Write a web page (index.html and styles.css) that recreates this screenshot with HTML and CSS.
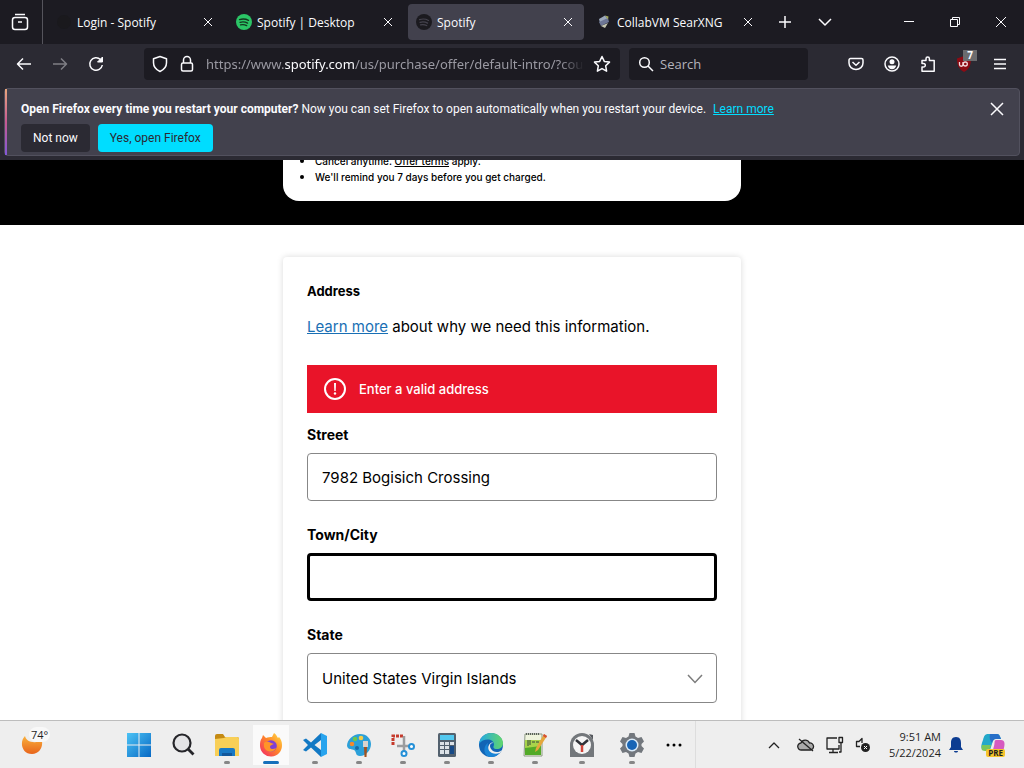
FILE: index.html
```html
<!DOCTYPE html>
<html lang="en">
<head>
    <meta charset="UTF-8">
    <meta name="viewport" content="width=device-width, initial-scale=1.0">
    <title>Spotify</title>
    <link rel="stylesheet" href="styles.css">
</head>
<body>
    <header class="browser">
        <div class="tab-bar">
            <button class="view-button" aria-label="Firefox View">
                <svg class="icon" width="18" height="18" viewBox="0 0 18 18"><path d="M4 1.500h10"/><rect x="1.500" y="4.500" width="15" height="12" rx="2.500"/><path d="M7 9h4"/></svg>
            </button>
            <div class="tabs">
                <div class="tab">
                    <svg width="16" height="16" viewBox="0 0 16 16"><circle cx="8" cy="8" r="7" fill="#1a191d"/></svg>
                    <span class="tab-title">Login - Spotify</span>
                    <button class="tab-close" aria-label="Close tab"><svg class="icon thin" width="16" height="16" viewBox="0 0 16 16"><path d="M4 4l8 8M12 4l-8 8"/></svg></button>
                </div>
                <div class="tab">
                    <svg width="16" height="16" viewBox="0 0 16 16"><circle cx="8" cy="8" r="8" fill="#2bc566"/><path d="M3.5 5.6c3-.9 6.500-.6 9 .8M4 8.300c2.600-.7 5.400-.4 7.600.8M4.500 10.800c2.200-.5 4.300-.3 6.200.8" fill="none" stroke="#14361f" stroke-width="1.300" stroke-linecap="round"/></svg>
                    <span class="tab-title">Spotify | Desktop</span>
                    <button class="tab-close" aria-label="Close tab"><svg class="icon thin" width="16" height="16" viewBox="0 0 16 16"><path d="M4 4l8 8M12 4l-8 8"/></svg></button>
                </div>
                <div class="tab active">
                    <svg width="16" height="16" viewBox="0 0 16 16"><circle cx="8" cy="8" r="8" fill="#1b1a1f"/><path d="M3.500 5.600c3-.9 6.500-.6 9 .8M4 8.300c2.600-.7 5.400-.4 7.600.8M4.500 10.800c2.200-.5 4.300-.3 6.200.8" fill="none" stroke="#45434e" stroke-width="1.200" stroke-linecap="round"/></svg>
                    <span class="tab-title">Spotify</span>
                    <button class="tab-close" aria-label="Close tab"><svg class="icon thin" width="16" height="16" viewBox="0 0 16 16"><path d="M4 4l8 8M12 4l-8 8"/></svg></button>
                </div>
                <div class="tab">
                    <svg width="16" height="16" viewBox="0 0 16 16"><path d="M3 5l6-3.500 3 3.500-8 4z" fill="#9aa7bb"/><path d="M3 8l9-4 1 4-8 4z" fill="#6c7595"/><path d="M9 1.500l3.500 1-.5 3z" fill="#a3aa5b"/><path d="M5 12l7-3-3 5z" fill="#c4c6b2"/></svg>
                    <span class="tab-title">CollabVM SearXNG</span>
                    <button class="tab-close" aria-label="Close tab"><svg class="icon thin" width="16" height="16" viewBox="0 0 16 16"><path d="M4 4l8 8M12 4l-8 8"/></svg></button>
                </div>
            </div>
            <button class="bar-button" aria-label="New tab"><svg class="icon" width="16" height="16" viewBox="0 0 16 16"><path d="M8 2v12M2 8h12"/></svg></button>
            <button class="bar-button" aria-label="List all tabs"><svg class="icon" width="16" height="16" viewBox="0 0 16 16"><path d="M2 5l6 6 6-6"/></svg></button>
            <div class="window-controls">
                <button aria-label="Minimize"><svg class="icon thin" width="12" height="12" viewBox="0 0 12 12"><path d="M1 5.500h10"/></svg></button>
                <button aria-label="Restore"><svg class="icon thin" width="12" height="12" viewBox="0 0 12 12"><path d="M1.500 3.500h7v7h-7zM3.500 3.500v-2h7v7h-2"/></svg></button>
                <button aria-label="Close"><svg class="icon thin" width="12" height="12" viewBox="0 0 12 12"><path d="M1 1l10 10M11 1L1 11"/></svg></button>
            </div>
        </div>

        <div class="nav-bar">
            <div class="nav-buttons">
                <button class="tool" aria-label="Back"><svg class="icon" width="16" height="16" viewBox="0 0 16 16"><path d="M7 2.500L1.500 8 7 13.500M1.500 8H15"/></svg></button>
                <button class="tool disabled" aria-label="Forward" disabled><svg class="icon" width="16" height="16" viewBox="0 0 16 16"><path d="M9 2.500L14.500 8 9 13.500M14.500 8H1"/></svg></button>
                <button class="tool" aria-label="Reload"><svg class="icon" width="16" height="16" viewBox="0 0 16 16"><path d="M12.500 3.500A6.300 6.300 0 1 0 14.300 9"/><path d="M14.500 1v5h-5z" fill="#fbfbfe" stroke-width="1"/></svg></button>
            </div>
            <div class="url-bar">
                <svg class="icon" width="16" height="18" viewBox="0 0 16 18"><path d="M8 1.500l6.500 2.300v4c0 4-2.700 7-6.500 8.700C4.200 14.800 1.500 11.800 1.500 7.800v-4z"/></svg>
                <svg class="icon" width="14" height="18" viewBox="0 0 14 18"><rect x="1.500" y="8" width="11" height="8" rx="1.500"/><path d="M3.500 8V5a3.500 3.500 0 0 1 7 0v3"/></svg>
                <span class="url">https://www.<b>spotify.com</b>/us/purchase/offer/default-intro/?cour</span>
                <button class="tool star" aria-label="Bookmark this page"><svg class="icon" width="18" height="18" viewBox="0 0 18 18"><path d="M9 1.500l2.300 4.900 5.200.7-3.800 3.700.9 5.400L9 13.600l-4.600 2.600.9-5.400-3.800-3.700 5.200-.7z"/></svg></button>
            </div>
            <label class="search-bar">
                <svg class="icon" width="16" height="16" viewBox="0 0 16 16"><circle cx="6.500" cy="6.500" r="4.800"/><path d="M10 10l5 5"/></svg>
                <input type="text" placeholder="Search" aria-label="Search">
            </label>
            <div class="nav-tools">
                <button class="tool" aria-label="Save to Pocket"><svg class="icon" width="16" height="16" viewBox="0 0 16 16"><path d="M2.500 2.500h11a1.500 1.500 0 0 1 1.500 1.500v3a7 6.500 0 0 1-14 0V4a1.500 1.500 0 0 1 1.500-1.500z"/><path d="M4.500 6L8 9.300 11.500 6"/></svg></button>
                <button class="tool" aria-label="Account"><svg class="icon" width="16" height="16" viewBox="0 0 16 16"><circle cx="8" cy="8" r="7"/><circle cx="8" cy="5.800" r="2.500" fill="#fbfbfe" stroke="none"/><path d="M3.800 9.500h8.400c-.4 2.400-2 3.700-4.200 3.700s-3.800-1.300-4.200-3.700z" fill="#fbfbfe" stroke="none"/></svg></button>
                <button class="tool" aria-label="Extensions"><svg class="icon" width="16" height="16" viewBox="0 0 16 16"><path d="M2 15.200V11h1.500a1.800 1.800 0 0 0 0-3.600H2V4.500h4V2.800a1.700 1.700 0 0 1 3.400 0v1.700h4.800v10.700z"/></svg></button>
                <button class="tool" aria-label="uBlock Origin">
                    <svg width="16" height="16" viewBox="0 0 16 16"><path d="M8 0l7 2.500C15 10 12.500 13.500 8 16 3.500 13.500 1 10 1 2.500z" fill="#8d0b14"/><path d="M3.500 6v2.500a1.500 1.500 0 0 0 3.500 0V6" fill="none" stroke="#f3d9dc" stroke-width="1.300"/><circle cx="9.300" cy="8" r="2" fill="none" stroke="#f3d9dc" stroke-width="1.300"/></svg>
                    <span class="count">7</span>
                </button>
                <button class="tool" aria-label="Open application menu"><svg class="icon" width="16" height="16" viewBox="0 0 16 16"><path d="M2 3.500h12M2 8h12M2 12.500h12"/></svg></button>
            </div>
        </div>

        <div class="notification">
            <div class="notification-body">
                <p><strong>Open Firefox every time you restart your computer?</strong> Now you can set Firefox to open automatically when you restart your device. <a href="#">Learn more</a></p>
                <div class="notification-actions">
                    <button>Not now</button>
                    <button class="primary">Yes, open Firefox</button>
                </div>
            </div>
            <button class="dismiss" aria-label="Dismiss"><svg class="icon" width="16" height="16" viewBox="0 0 16 16"><path d="M2 2l12 12M14 2L2 14"/></svg></button>
        </div>
    </header>

    <main class="page">
        <section class="hero">
            <div class="offer">
                <ul>
                    <li>Cancel anytime. <a href="#">Offer terms</a> apply.</li>
                    <li>We'll remind you 7 days before you get charged.</li>
                </ul>
            </div>
        </section>

        <form class="card">
            <h2>Address</h2>
            <p class="info"><a href="#">Learn more</a> about why we need this information.</p>
            <div class="alert" role="alert">
                <svg width="24" height="24" viewBox="0 0 24 24"><circle cx="12" cy="12" r="10" fill="none" stroke="#fff" stroke-width="2"/><path d="M11 6h2l-.3 8h-1.400z" fill="#fff"/><circle cx="12" cy="16.500" r="1.200" fill="#fff"/></svg>
                <span>Enter a valid address</span>
            </div>
            <div class="field">
                <label for="street">Street</label>
                <input type="text" id="street" value="7982 Bogisich Crossing">
            </div>
            <div class="field">
                <label for="city">Town/City</label>
                <input type="text" id="city" class="focused">
            </div>
            <div class="field">
                <label for="state">State</label>
                <div class="select-box">
                    <select id="state">
                        <option>United States Virgin Islands</option>
                    </select>
                    <svg width="16" height="16" viewBox="0 0 16 16"><path d="M1 4l7 7.500L15 4" fill="none" stroke="#7c7c7c" stroke-width="1.500"/></svg>
                </div>
            </div>
        </form>
    </main>

    <footer class="taskbar">
        <button class="weather" aria-label="Weather">
            <svg width="24" height="24" viewBox="0 0 24 24"><defs><linearGradient id="moon" x1="0" y1="0" x2="0" y2="1"><stop offset="0" stop-color="#f9b13c"/><stop offset="1" stop-color="#e8641b"/></linearGradient></defs><path d="M5 3c1 5 7 8 17 5 1 7-3 13-10 13C2 21-1 9 5 3z" fill="url(#moon)"/></svg>
            <span class="degrees">74°</span>
        </button>
        <nav class="apps">
            <button class="app" aria-label="Start"><svg width="24" height="24" viewBox="0 0 24 24"><defs><linearGradient id="win" x1="0" y1="0" x2="1" y2="1"><stop offset="0" stop-color="#4cc3f5"/><stop offset="1" stop-color="#0768c4"/></linearGradient></defs><path d="M0 0h11.500v11.500H0zM12.500 0H24v11.500H12.500zM0 12.500h11.500V24H0zM12.500 12.500H24V24H12.500z" fill="url(#win)"/></svg></button>
            <button class="app" aria-label="Search"><svg width="24" height="24" viewBox="0 0 24 24"><circle cx="11" cy="10" r="8.500" fill="#e4e4e6" stroke="#26262a" stroke-width="2.200"/><path d="M17 16l5.500 5.500" stroke="#26262a" stroke-width="2.800"/></svg></button>
            <button class="app running" aria-label="File Explorer"><svg width="26" height="24" viewBox="0 0 26 24"><path d="M1 3a2 2 0 0 1 2-2h6l2 3h12a2 2 0 0 1 2 2v4H1z" fill="#c48a14"/><path d="M1 6l9-1 2-1h11a2 2 0 0 1 2 2v17H1z" fill="#f8cf57"/><path d="M5 23v-6a2 2 0 0 1 2-2h12a2 2 0 0 1 2 2v6z" fill="#1879c5"/><path d="M8 20h10v3H8z" fill="#11579b"/></svg></button>
            <button class="app running current" aria-label="Firefox"><svg width="24" height="24" viewBox="0 0 24 24"><defs><linearGradient id="fox" x1="1" y1="0" x2="0" y2="1"><stop offset="0" stop-color="#ffe14a"/><stop offset=".45" stop-color="#ff8a27"/><stop offset="1" stop-color="#f2216b"/></linearGradient></defs><path d="M3 5l1-3 3 3c2-1 4-1 6-1l2-4c3 2 3 4 4 5l1-1c2 2 3 5 3 8a11 11 0 0 1-22 1c0-3 0-6 2-8z" fill="url(#fox)"/><circle cx="12" cy="13" r="5.800" fill="#7e3fd4"/><path d="M5 10c3-2 5-1 7 0l3 1c-2 1-4 1-4 3s3 3 6 1c-2 5-10 5-12-1z" fill="#ff9428"/></svg></button>
            <button class="app running" aria-label="Visual Studio Code"><svg width="24" height="24" viewBox="0 0 24 24"><path d="M18 0L8 9.500 3 5.500 0 7l5 5-5 5 3 1.500 5-4L18 24v-7l-6.500-5L18 7z" fill="#1279c4"/><path d="M18 0l6 3v18l-6 3z" fill="#28a4ee"/></svg></button>
            <button class="app running" aria-label="Paint"><svg width="24" height="24" viewBox="0 0 24 24"><path d="M13 1c7 0 11 5 11 10 0 6-5 12-11 12-5 0-3-4-6-6-2-1-6 0-7-4C0 7 6 1 13 1z" fill="#2ba0d9"/><circle cx="5" cy="11" r="2.300" fill="#f28a2c"/><circle cx="8" cy="6" r="2.300" fill="#6dc74d"/><circle cx="14" cy="5" r="2.300" fill="#f4cd47"/><circle cx="10" cy="15" r="2" fill="#176ba7"/><path d="M16 8h5v6h-5z" fill="#d7d3ce"/><path d="M17 14h3l-.5 10h-2z" fill="#a1521f"/></svg></button>
            <button class="app running" aria-label="Snipping Tool"><svg width="24" height="24" viewBox="0 0 24 24"><path d="M2 12V3h10" fill="none" stroke="#c53a2c" stroke-width="3" stroke-dasharray="3 1"/><path d="M13 3v15M6 13h12" stroke="#9b9c9e" stroke-width="2.500"/><circle cx="13" cy="20.500" r="2.500" fill="#fff" stroke="#2590d7" stroke-width="2"/><circle cx="20.500" cy="13.500" r="2.500" fill="#fff" stroke="#2590d7" stroke-width="2"/></svg></button>
            <button class="app running" aria-label="Calculator"><svg width="20" height="24" viewBox="0 0 20 24"><rect x="1" width="18" height="24" rx="1.500" fill="#53616e"/><path d="M3 2h14v5H3z" fill="#52c8ef"/><path d="M3 9h4v3H3zM8 9h4v3H8zM13 9h4v3h-4zM3 13h4v3H3zM8 13h4v3H8zM3 17h4v4H3zM8 17h4v4H8z" fill="#dce2e7"/><path d="M13 13h4v8h-4z" fill="#174a87"/></svg></button>
            <button class="app running" aria-label="Edge"><svg width="24" height="24" viewBox="0 0 24 24"><defs><linearGradient id="edge" x1="0" y1="0" x2="1" y2="0"><stop offset="0" stop-color="#22a7e5"/><stop offset="1" stop-color="#62d76b"/></linearGradient></defs><circle cx="12" cy="12" r="12" fill="#1264b5"/><path d="M0 11C1 4 6 0 12 0c7 0 12 5 12 10 0 4-3 6-6 6-4 0-4-2-3-4 0-7-11-7-15-1z" fill="url(#edge)"/><path d="M9 10c-2 6 3 11 12 9-2 3-5 5-9 5C5 24 3 14 9 10z" fill="#1a84d6"/><path d="M14 10c-4 0-4 5 0 8 3 2 7 1 9-1l-2 3c-8 3-14-3-11-8 1-2 3-3 4-2z" fill="#eee"/></svg></button>
            <button class="app running" aria-label="Notepad++"><svg width="24" height="24" viewBox="0 0 24 24"><path d="M2 1h17v22H1z" fill="#eef3dc" stroke="#8c9984"/><path d="M2 7h16v15H2z" fill="#a8d34a"/><path d="M2 15l16-2v9H2z" fill="#52aa27"/><path d="M3 1h14" stroke="#596058" stroke-width="2" stroke-dasharray="1 1"/><path d="M5 7v6M7 7v5M9 9h3M13 9h3" stroke="#34443a"/><path d="M21 1l3 2-9 14-3 2 1-4z" fill="#e5a63c"/><path d="M21 1l3 2-1 2-3-2z" fill="#d54e36"/></svg></button>
            <button class="app wide running" aria-label="Clock"><svg width="24" height="24" viewBox="0 0 24 24"><path d="M19 1l4 1v5z" fill="#55585d"/><path d="M0 12a12 12 0 0 1 24 0v12H0z" fill="#73777b"/><circle cx="12" cy="12" r="9" fill="#f5f5f5"/><path d="M6 7l6 5 6-5" fill="none" stroke="#303238" stroke-width="2.500"/><path d="M12 12v7" stroke="#d1453a" stroke-width="2.500"/></svg></button>
            <button class="app wide running" aria-label="Settings"><svg width="24" height="24" viewBox="0 0 24 24"><path d="M9.500 0h5l1 3.500 2.500 1.500 3.500-1L24 8.500 21.500 11v2l2.500 2.500-2.500 4.500-3.500-1-2.500 1.500-1 3.500h-5l-1-3.500L6 19l-3.500 1L0 15.500 2.500 13v-2L0 8.500 2.500 4 6 5l2.500-1.500z" fill="#72777d"/><circle cx="12" cy="12" r="6.500" fill="#dcecf9"/><circle cx="12" cy="12" r="5" fill="#1764b5"/></svg></button>
            <button class="app narrow" aria-label="More apps"><svg width="18" height="4" viewBox="0 0 18 4"><circle cx="3" cy="2" r="1.500"/><circle cx="9" cy="2" r="1.500"/><circle cx="15" cy="2" r="1.500"/></svg></button>
        </nav>
        <div class="tray">
            <div class="tray-icons">
                <button class="tray-more" aria-label="Show hidden icons"><svg class="icon dark" width="12" height="12" viewBox="0 0 12 12"><path d="M1 9l5-5 5 5"/></svg></button>
                <svg class="icon dark" width="18" height="14" viewBox="0 0 18 14"><path d="M4.500 12a3.500 3.500 0 0 1-.5-7C5.500 1.500 10.500 1 12.500 5a3.500 3.500 0 0 1 1 7z" fill="#aaa"/><path d="M2 1l14 12"/></svg>
                <svg class="icon dark" width="18" height="18" viewBox="0 0 18 18"><path d="M11 2H1v11h12V9M7 13v3M3 16.500h9"/><rect x="13" y="1.500" width="3.500" height="5"/><path d="M15 7v9h-2"/></svg>
                <svg class="icon dark" width="16" height="16" viewBox="0 0 16 16"><path d="M5 9.500H1.500v-5H4l3-3V6"/><circle cx="10.500" cy="10.500" r="4.500" fill="#222" stroke="none"/><path d="M9 9l3 3M12 9l-3 3" stroke="#fff" stroke-width="1"/></svg>
            </div>
            <div class="clock"><time>9:51 AM</time><time>5/22/2024</time></div>
            <svg width="14" height="16" viewBox="0 0 14 16"><path d="M7 0c4 0 5 3 5 6v4l2 3H0l2-3V6c0-3 1-6 5-6zM5 14h4c0 2-4 2-4 0z" fill="#0c3c91"/></svg>
            <div class="copilot">
                <svg width="24" height="24" viewBox="0 0 24 24"><path d="M7 1h9c3 0 3 3 4 5h-5c-3 0-3 2-4 5l-2 6H4c-5 0-4-5-2-10 1-4 2-6 5-6z" fill="#23a8c9"/><path d="M9 1h7c2 0 3 2 4 5h-5c-2 0-3 1-4 4-2-2-3-6-2-9z" fill="#276fc8"/><path d="M1 12h9l-2 6H4c-4 0-4-3-3-6z" fill="#7ac65a"/><path d="M15 7h5c4 0 4 4 3 8l-2 6h-7c-4 0-2-4-1-8 1-3 0-6 2-6z" fill="#d65ac0"/></svg>
                <span class="pre">PRE</span>
            </div>
        </div>
    </footer>
</body>
</html>
```
FILE: styles.css
```css
*{
    box-sizing: border-box;
}
body{
    display: flex;
    flex-direction: column;
    height: 100vh;
    margin: 0;
    overflow: hidden;
    background-color: white;
    font-family: "Open Sans", sans-serif;
    font-size: 12px;
}
button{
    display: flex;
    align-items: center;
    justify-content: center;
    padding: 0;
    border: none;
    background: none;
    color: inherit;
    font: inherit;
}
svg{
    flex-shrink: 0;
}
.icon{
    fill: none;
    stroke: #fbfbfe;
    stroke-width: 1.5;
    stroke-linejoin: round;
}
.icon.thin{
    stroke-width: 1;
}
.icon.dark{
    stroke: #222222;
    stroke-width: 1.3;
}

/* browser chrome */
.browser{
    flex-shrink: 0;
    padding-bottom: 4px;
    background-color: #2b2a33;
    color: #fbfbfe;
}
.tab-bar{
    display: flex;
    align-items: center;
    height: 44px;
    background-color: #1c1b22;
}
.view-button{
    width: 43px;
    height: 44px;
    padding-right: 3px;
    border-right: 1px solid #55545c;
}
.tabs{
    display: flex;
    flex: 0 1 722px;
    gap: 4px;
    padding: 0 1px 0 5px;
}
.tab{
    display: flex;
    flex: 1;
    align-items: center;
    gap: 5px;
    height: 36px;
    padding: 0 8px;
    border-radius: 4px;
}
.tab.active{
    background-color: #42414d;
}
.tab-title{
    flex: 1;
    white-space: nowrap;
}
.bar-button{
    width: 40px;
    height: 36px;
}
.window-controls{
    display: flex;
    margin-left: auto;
}
.window-controls button{
    width: 46px;
    height: 44px;
}
.nav-bar{
    display: flex;
    align-items: center;
    height: 40px;
    padding: 0 6px;
}
.nav-buttons,
.nav-tools{
    display: flex;
}
.nav-buttons{
    margin-right: 30px;
}
.nav-tools{
    margin-left: auto;
}
.tool{
    position: relative;
    width: 36px;
    height: 32px;
}
.tool.disabled{
    opacity: 0.4;
}
.url-bar,
.search-bar{
    display: flex;
    align-items: center;
    height: 32px;
    border-radius: 4px;
    background-color: #1c1b22;
}
.url-bar{
    flex: 0 1 476px;
    min-width: 0;
    padding-left: 8px;
}
.url-bar > .icon{
    margin-right: 12px;
}
.url{
    flex: 1;
    overflow: hidden;
    color: #9a99a2;
    font-family: "Noto Sans", sans-serif;
    font-size: 13px;
    white-space: nowrap;
    mask-image: linear-gradient(to left, transparent, black 24px);
}
.url b{
    color: #fbfbfe;
    font-weight: normal;
}
.search-bar{
    flex: 0 1 179px;
    gap: 6px;
    margin-left: 9px;
    padding-left: 9px;
}
.search-bar input{
    width: 100%;
    min-width: 0;
    padding: 0;
    border: none;
    background: none;
    color: inherit;
    font: inherit;
    font-size: 13px;
}
.search-bar input::placeholder{
    color: #b4b3bb;
    opacity: 1;
}
.count{
    position: absolute;
    top: 2px;
    right: 5px;
    padding: 0 4px;
    background-color: #6b6b6e;
    font-size: 10px;
    font-weight: bold;
    line-height: 11px;
}
.notification{
    position: relative;
    display: flex;
    align-items: flex-start;
    justify-content: space-between;
    margin: 4px 4px 0;
    padding: 10px 14px 3px 16px;
    border: 1px solid #52515e;
    border-radius: 4px;
    background-color: #42414d;
    font-family: Roboto, sans-serif;
}
.notification::before{
    content: "";
    position: absolute;
    top: 0;
    bottom: 0;
    left: 0;
    width: 2px;
    background: linear-gradient(to bottom, #e8a57c, #c75a92, #8258d8);
}
.notification p{
    margin: 0 0 5px;
    line-height: 20px;
}
.notification a{
    margin-left: 4px;
    color: #00ddff;
}
.notification-actions{
    display: flex;
    gap: 8px;
}
.notification-actions button{
    height: 28px;
    padding: 0 12px;
    border-radius: 4px;
    background-color: #2b2a33;
}
.notification-actions .primary{
    background-color: #00ddff;
    color: #2b2a33;
}
.dismiss{
    width: 16px;
    height: 20px;
}

/* checkout page */
.page{
    flex: 1;
    min-height: 0;
    overflow: hidden;
    color: black;
    font-family: Inter, sans-serif;
}
.hero{
    display: flex;
    flex-direction: column;
    justify-content: flex-end;
    height: 65px;
    padding-bottom: 24px;
    overflow: hidden;
    background-color: black;
}
.offer{
    width: 100%;
    max-width: 458px;
    margin: 0 auto;
    padding: 16px 16px 16px 32px;
    border-radius: 16px;
    background-color: white;
    font-size: 10px;
    font-weight: 500;
    line-height: 15px;
}
.offer ul{
    margin: 0;
    padding: 0;
}
.offer li::marker{
    font-size: 13px;
}
.offer a{
    color: inherit;
}
.card{
    max-width: 458px;
    margin: 32px auto 0;
    padding: 24px;
    border-radius: 4px;
    background-color: white;
    box-shadow: 0 0 6px rgba(0, 0, 0, 0.15);
}
.card h2{
    margin: 0;
    font-size: 13px;
    line-height: 20px;
}
.info{
    margin: 14px 0 26px;
    font-size: 15px;
    line-height: 24px;
}
.info a{
    color: #196fb4;
}
.alert{
    display: flex;
    align-items: center;
    gap: 12px;
    height: 48px;
    margin-bottom: 12px;
    padding: 0 16px;
    background-color: #e91429;
    color: white;
    font-size: 13px;
    font-weight: 500;
}
.field{
    margin-bottom: 24px;
}
.field label{
    display: block;
    margin-bottom: 8px;
    font-size: 14px;
    font-weight: bold;
    line-height: 20px;
}
.field input,
.field select{
    display: block;
    width: 100%;
    height: 48px;
    padding: 0 14px;
    border: 1px solid #878787;
    border-radius: 4px;
    background-color: white;
    color: black;
    font-family: inherit;
    font-size: 15px;
}
.field .focused{
    border: 3px solid black;
}
.field select{
    height: 50px;
    appearance: none;
}
.select-box{
    position: relative;
}
.select-box svg{
    position: absolute;
    top: 18px;
    right: 14px;
    pointer-events: none;
}

/* windows taskbar */
.taskbar{
    display: flex;
    flex-shrink: 0;
    align-items: center;
    height: 48px;
    border-top: 1px solid #bdbdbd;
    background-color: #eeeeee;
    color: #1f1f1f;
}
.weather{
    position: relative;
    width: 64px;
    height: 47px;
}
.degrees{
    position: absolute;
    top: 6px;
    left: 29px;
    padding: 0 2px;
    border-radius: 8px;
    background-color: #f8f8f8;
    font-size: 11px;
    line-height: 15px;
}
.apps{
    display: flex;
    margin-left: 53px;
    padding-right: 4px;
    border-right: 1px solid #dddddd;
}
.app{
    position: relative;
    width: 44px;
    height: 47px;
}
.app.wide{
    width: 50px;
}
.app.narrow{
    width: 34px;
}
.app.current{
    background: linear-gradient(#fafafa, #fafafa) center / 36px 40px no-repeat;
}
.running::after{
    content: "";
    position: absolute;
    bottom: 4px;
    width: 6px;
    height: 3px;
    border-radius: 2px;
    background-color: #868686;
}
.current::after{
    width: 16px;
    background-color: #1670bb;
}
.tray{
    display: flex;
    align-items: center;
    gap: 8px;
    margin-left: auto;
    padding-right: 19px;
}
.tray-icons{
    display: flex;
    align-items: center;
    gap: 11px;
    margin-right: 10px;
}
.tray-more{
    width: 24px;
    height: 40px;
}
.clock{
    display: flex;
    flex-direction: column;
    align-items: flex-end;
    font-size: 11px;
    line-height: 16px;
}
.copilot{
    position: relative;
    display: flex;
    margin-left: 10px;
}
.pre{
    position: absolute;
    right: 0;
    bottom: 0;
    padding: 0 2px;
    border-radius: 2px;
    background-color: #f6c42c;
    font-size: 8px;
    font-weight: bold;
    line-height: 8px;
}
```
